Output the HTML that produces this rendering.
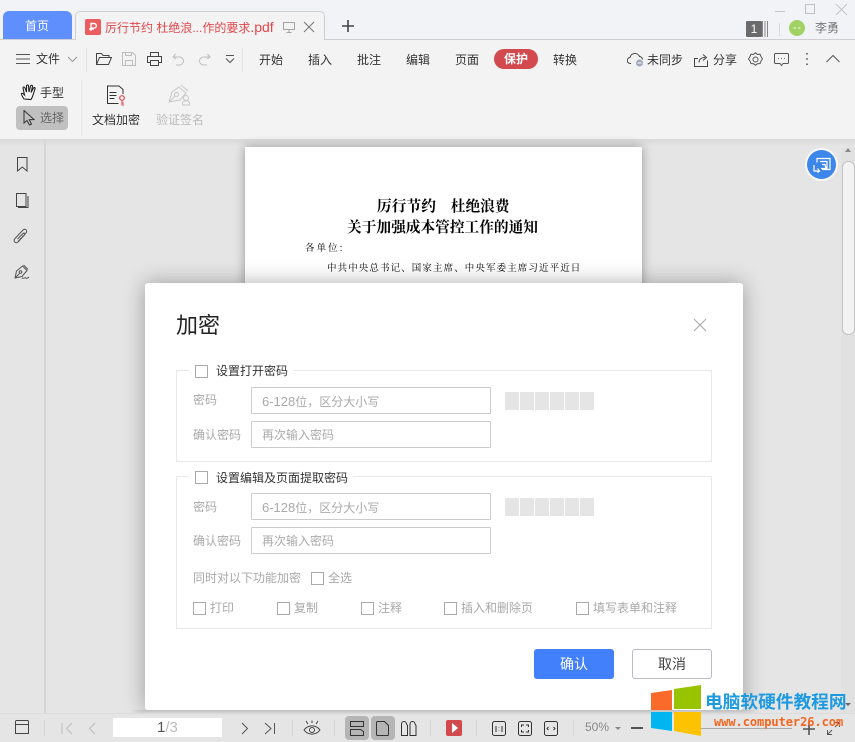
<!DOCTYPE html>
<html><head><meta charset="utf-8"><style>
html,body{margin:0;padding:0}
body{width:855px;height:742px;overflow:hidden;position:relative;background:#e5e5e5;font-family:"Liberation Sans","Noto Sans CJK SC",sans-serif}
.a,.t,svg{position:absolute}
.t{white-space:nowrap;font-size:12px;line-height:16px;color:#333}
.g{color:#a9a9a9}
.cb{position:absolute;width:11px;height:11px;border:1px solid #aaa;background:#fff}
.in{position:absolute;left:251px;width:238px;height:25px;border:1px solid #ccc;border-radius:1px;background:#fff;font-size:12px;line-height:27px;color:#aaa;text-indent:10px}
.in b{font-weight:normal;font-size:13px}
.bx{position:absolute;left:176px;width:534px;border:1px solid #e9e9e9}
.s{position:absolute;width:14px;height:18px;background:#e5e5e5}
svg{fill:none;stroke:#444;stroke-width:1}
</style></head><body>

<!-- title bar -->
<div class="a" style="left:0;top:0;width:855px;height:39px;background:#f2f3f7"></div>
<div class="a" style="left:0;top:39px;width:855px;height:1px;background:#cfcfd3"></div>
<div class="a" style="left:3px;top:11px;width:69px;height:28px;background:#5f8ffc;border-radius:6px 6px 0 0"></div>
<div class="t" style="left:25px;top:18px;color:#fff">首页</div>
<div class="a" style="left:75px;top:11px;width:250px;height:29px;box-sizing:border-box;background:#f3f3f3;border:1px solid #cfcfd3;border-bottom:0;border-radius:5px 5px 0 0"></div>
<div class="a" style="left:85px;top:19px;width:16px;height:16px;background:#ec5d5f;border-radius:2px"></div>
<svg style="left:85px;top:19px" width="16" height="16" viewBox="0 0 16 16"><path d="M6 12V4.500h3a2.200 2.200 0 0 1 0 4.600H6M4 10h5" stroke="#fff" stroke-width="1.400"/></svg>
<div class="t" style="left:105px;top:19px;font-size:12px;color:#e0474c">厉行节约 杜绝浪...作的要求<span style="font-size:14px">.pdf</span></div>
<svg style="left:282px;top:20px" width="14" height="14" viewBox="0 0 14 14"><path d="M1.500 2.500h11v7h-11zM7 9.500v3M4.500 12.500h5" stroke="#a5a5a5"/></svg>
<svg style="left:303px;top:21px" width="12" height="12" viewBox="0 0 12 12"><path d="M1 1l10 10M11 1L1 11" stroke="#777"/></svg>
<svg style="left:341px;top:19px" width="14" height="14" viewBox="0 0 14 14"><path d="M7 1v12M1 7h12" stroke="#444" stroke-width="1.600"/></svg>

<!-- window controls -->
<svg style="left:775px;top:2px" width="80" height="16" viewBox="0 0 80 16"><path d="M0 9.500h10" stroke="#c5c5c5"/><path d="M30.500 2.500h9v9h-9z" stroke="#c0c0c0"/><path d="M61 2l11 11M72 2L61 13" stroke="#c5c5c5"/></svg>
<div class="a" style="left:746px;top:21px;width:16px;height:16px;background:#6b6b6b;border-radius:1px;color:#fff;font-size:12px;line-height:16px;text-align:center">1</div>
<svg style="left:762px;top:21px" width="6" height="16" viewBox="0 0 6 16"><path d="M.5 0v16M3 0v16M5.500 0v16" stroke="#888"/></svg>
<div class="a" style="left:779px;top:23px;width:1px;height:13px;background:#dcdcdc"></div>
<div class="a" style="left:789px;top:20px;width:16px;height:16px;border-radius:50%;background:#a2d264"></div>
<svg style="left:789px;top:20px" width="16" height="16" viewBox="0 0 16 16"><path d="M4.500 8h2.500M9 8h2.500" stroke="#d6eab8" stroke-width="1.500"/></svg>
<div class="t" style="left:815px;top:20px;color:#777">李勇</div>

<!-- toolbar -->
<div class="a" style="left:0;top:40px;width:855px;height:99px;background:#f3f3f3"></div>
<svg style="left:16px;top:53px" width="14" height="12" viewBox="0 0 14 12"><path d="M0 1.500h14M0 6h14M0 10.500h14" stroke="#555"/></svg>
<div class="t" style="left:36px;top:51px">文件</div>
<svg style="left:67px;top:56px" width="11" height="7" viewBox="0 0 11 7"><path d="M1 1l4.500 4.500L10 1" stroke="#999"/></svg>
<div class="a" style="left:86px;top:48px;width:1px;height:24px;background:#e2e2e2"></div>
<svg style="left:96px;top:52px" width="16" height="14" viewBox="0 0 16 14"><path d="M.5 12.500V1.500h5l1.500 2h6v2M.5 12.500h12l3-7H3.500z" stroke="#444"/></svg>
<svg style="left:122px;top:52px" width="14" height="14" viewBox="0 0 14 14"><path d="M.5.500h10l3 3v10H.5zM3.500 13.500v-5h7v5M3.500 .500v3h6v-3" stroke="#bdbdbd"/></svg>
<svg style="left:147px;top:52px" width="15" height="14" viewBox="0 0 15 14"><path d="M3.500 4.500v-4h8v4M3.500 10.500h-3v-6h14v6h-3M3.500 8.500h8v5h-8z" stroke="#444"/></svg>
<svg style="left:172px;top:53px" width="13" height="13" viewBox="0 0 13 13"><path d="M3.500 1L1 4l3 2M1 4h6.500a4 4 0 0 1 0 8H4" stroke="#bdbdbd"/></svg>
<svg style="left:198px;top:53px" width="13" height="13" viewBox="0 0 13 13"><path d="M9.500 1L12 4 9 6M12 4H5.500a4 4 0 0 0 0 8H9" stroke="#bdbdbd"/></svg>
<svg style="left:225px;top:55px" width="10" height="9" viewBox="0 0 10 9"><path d="M1 .500h8M1 3.500l4 4 4-4" stroke="#555"/></svg>
<div class="a" style="left:242px;top:48px;width:1px;height:24px;background:#e2e2e2"></div>
<div class="t" style="left:259px;top:52px">开始</div>
<div class="t" style="left:308px;top:52px">插入</div>
<div class="t" style="left:357px;top:52px">批注</div>
<div class="t" style="left:406px;top:52px">编辑</div>
<div class="t" style="left:455px;top:52px">页面</div>
<div class="a" style="left:494px;top:49px;width:44px;height:20px;border-radius:10px;background:#d2494e"></div>
<div class="t" style="left:504px;top:51px;color:#fff;font-weight:bold">保护</div>
<div class="t" style="left:553px;top:52px">转换</div>
<svg style="left:627px;top:52px" width="17" height="15" viewBox="0 0 17 15"><path d="M4 11.500H3.500a3 3 0 0 1-.5-6 5 5 0 0 1 9.500-1 3.500 3.500 0 0 1 3 3" stroke="#444"/><circle cx="12.500" cy="11" r="3.500" fill="#9fa9bd" stroke="none"/><path d="M10.500 11h4" stroke="#fff"/></svg>
<div class="t" style="left:647px;top:52px">未同步</div>
<svg style="left:694px;top:53px" width="15" height="14" viewBox="0 0 15 14"><path d="M4 5.500H.5v8h13v-6M5 9.500c0-3 2-5 6-5M9 1.500l3.500 3-3.500 3" stroke="#444"/></svg>
<div class="t" style="left:713px;top:52px">分享</div>
<svg style="left:748px;top:52px" width="15" height="15" viewBox="0 0 15 15"><path d="M7.500 .800l2 1.700 2.500-.3 1 2.300 1.500 2.500-1.500 2-1 2.500-2.500.2-2 1.500-2-1.500-2.500-.2-1-2.500L.500 7 2 4.500l1-2.300 2.500.3z" stroke="#555"/><circle cx="7.500" cy="7.500" r="2.500" stroke="#555"/></svg>
<svg style="left:774px;top:53px" width="15" height="14" viewBox="0 0 15 14"><path d="M1.500.500h12a1 1 0 0 1 1 1v8a1 1 0 0 1-1 1H9l-1.500 2-1.500-2H1.500a1 1 0 0 1-1-1v-8a1 1 0 0 1 1-1z" stroke="#555"/><path d="M4 5.500h1M7 5.500h1M10 5.500h1" stroke="#777"/></svg>
<svg style="left:805px;top:52px" width="4" height="14" viewBox="0 0 4 14"><path d="M2 1v1.500M2 6.300v1.500M2 11.500V13" stroke="#555" stroke-width="1.600"/></svg>
<svg style="left:826px;top:54px" width="14" height="9" viewBox="0 0 14 9"><path d="M.5 8L7 1.500 13.500 8" stroke="#555"/></svg>

<svg style="left:20px;top:84px" width="17" height="17" viewBox="0 0 17 17"><path d="M4 15C2 12 1 10 1.500 9.500c1-.7 2 .5 3 1.500L3 4c0-1.500 1.500-1.500 2 0l1.500 4L6.500 2c0-1.500 2-1.500 2 0L9 8l1.500-6c.5-1 2-1 2 .5L11 8.500l2.500-4.500c.8-1 2-.3 1.500 1L13 11c-.5 2-1 3-2 4.500z" stroke="#222" stroke-width="1.100"/></svg>
<div class="t" style="left:40px;top:85px">手型</div>
<div class="a" style="left:16px;top:106px;width:52px;height:24px;border-radius:4px;background:#c0c0c0"></div>
<svg style="left:23px;top:110px" width="12" height="16" viewBox="0 0 12 16"><path d="M1 .500v12.500l3-2.500 2.500 4.500 2-1-2.300-4.300L11 9.500z" stroke="#333"/></svg>
<div class="t" style="left:40px;top:110px;color:#666">选择</div>
<div class="a" style="left:81px;top:80px;width:1px;height:56px;background:#e6e6e6"></div>
<svg style="left:106px;top:85px" width="20" height="21" viewBox="0 0 20 21"><path d="M12.500 18.500H1.500V1H13l4 3.500V9M3.500 7.500h7M3.500 10.500h7M3.500 13.500h5" stroke="#333"/><circle cx="16" cy="13" r="2.300" stroke="#e0474c" stroke-width="1.200"/><path d="M16 15.500v5M16 18h2M16 20h2" stroke="#e0474c"/></svg>
<div class="t" style="left:92px;top:112px">文档加密</div>
<svg style="left:168px;top:83px" width="23" height="23" viewBox="0 0 23 23"><path d="M1 19L4 9l7-5 7 6-6 7zM13 2l7 6M1 19l6-6" stroke="#c8c8c8"/><circle cx="8.500" cy="11.500" r="2" stroke="#c8c8c8"/><circle cx="18" cy="15" r="2.500" stroke="#c8c8c8"/><path d="M14.500 22v-2a2 2 0 0 1 2-2h3a2 2 0 0 1 2 2v2z" stroke="#c8c8c8"/></svg>
<div class="t" style="left:156px;top:112px;color:#bcbcbc">验证签名</div>

<!-- content area -->
<div class="a" style="left:0;top:139px;width:855px;height:7px;background:linear-gradient(#d9d9d9,#e5e5e5)"></div>
<div class="a" style="left:44px;top:139px;width:2px;height:574px;background:#d6d6d6"></div>
<svg style="left:17px;top:157px" width="11" height="15" viewBox="0 0 11 15"><path d="M.500.500h9.500v13.500L5.300 10 .500 14z" stroke="#444"/></svg>
<svg style="left:16px;top:193px" width="13" height="15" viewBox="0 0 13 15"><path d="M.500 13.500V.500h9.500v13zM12 3v11.500H2" stroke="#444"/></svg>
<svg style="left:13px;top:228px" width="16" height="16" viewBox="0 0 16 16"><path d="M5 13.500l8-8.500c2-2.500-1-5-3-3L2 10.500c-2.500 3 1 5.500 3 3.500L11.500 7c1-1.500-.5-2.500-1.500-1.500L4.500 11" stroke="#555"/></svg>
<svg style="left:14px;top:264px" width="16" height="16" viewBox="0 0 16 16"><path d="M1 14L2.500 7l6-5 4.500 4.500-5 6zM1 14l4.500-4.500M9.500 1L14 5.500M8 14c2 1 3-1 4 0s2 0 3-1" stroke="#555"/><circle cx="6.500" cy="8" r="1.300" stroke="#555"/></svg>

<!-- page -->
<div class="a" style="left:245px;top:147px;width:397px;height:140px;background:#fff;box-shadow:0 0 10px rgba(0,0,0,.35)"></div>
<div class="t" style="left:377px;top:197px;font-size:14.700px;line-height:18px;font-weight:bold;color:#000;font-family:'Noto Serif CJK SC','Noto Sans CJK SC',serif">厉行节约<span style="display:inline-block;width:15px"></span>杜绝浪费</div>
<div class="t" style="left:347px;top:218px;font-size:14.700px;line-height:18px;font-weight:bold;color:#000;font-family:'Noto Serif CJK SC','Noto Sans CJK SC',serif">关于加强成本管控工作的通知</div>
<div class="t" style="left:305px;top:240px;font-size:9.500px;line-height:14px;letter-spacing:2px;color:#000;font-family:'Noto Serif CJK SC',serif">各单位:</div>
<div class="t" style="left:327px;top:260px;font-size:9.500px;line-height:14px;letter-spacing:1.100px;color:#000;font-family:'Noto Serif CJK SC',serif">中共中央总书记、国家主席、中央军委主席习近平近日</div>

<!-- scrollbar -->
<div class="a" style="left:841px;top:148px;width:14px;height:565px;background:#e1e1e1"></div>
<div class="a" style="left:842px;top:161px;width:13px;height:174px;box-sizing:border-box;background:#f3f3f3;border:1px solid #c4c4c4;border-radius:6px"></div>
<div class="a" style="left:845px;top:148px;width:0;height:0;border-left:3px solid transparent;border-right:3px solid transparent;border-bottom:4px solid #888"></div>

<!-- blue circle -->
<div class="a" style="left:807px;top:150px;width:29px;height:29px;box-sizing:content-box;border-radius:50%;background:#3d86ea;box-shadow:0 0 0 2px #f8f8f8"></div>
<svg style="left:813px;top:156px" width="18" height="17" viewBox="0 0 18 17"><path d="M4 6.500V2.500h13v11H9M7 5.500h7v8M9 8.500h3l1 4H8M1 9v6h5M4.500 12.500L6.500 15l-2 1.500" stroke="#fff" stroke-width="1.200"/></svg>

<!-- dialog shadow -->
<div class="a" style="left:145px;top:283px;width:598px;height:427px;background:#fff;border-radius:3px;box-shadow:0 0 22px rgba(0,0,0,.32)"></div>
<div class="t" style="left:176px;top:311px;font-size:22px;line-height:30px;color:#222">加密</div>
<svg style="left:693px;top:318px" width="14" height="14" viewBox="0 0 14 14"><path d="M1 1l12 12M13 1L1 13" stroke="#a5a5a5"/></svg>

<!-- group 1 -->
<div class="bx" style="top:370px;height:90px"></div>
<div class="a" style="left:189px;top:362px;width:104px;height:16px;background:#fff"></div>
<div class="cb" style="left:195px;top:365px"></div>
<div class="t" style="left:216px;top:363px">设置打开密码</div>
<div class="t g" style="left:193px;top:392px">密码</div>
<div class="in" style="top:387px"><b>6-128</b>位，区分大小写</div>
<div class="t g" style="left:193px;top:427px">确认密码</div>
<div class="in" style="top:421px">再次输入密码</div>
<div class="s" style="left:505px;top:392px"></div><div class="s" style="left:520px;top:392px"></div><div class="s" style="left:535px;top:392px"></div><div class="s" style="left:550px;top:392px"></div><div class="s" style="left:565px;top:392px"></div><div class="s" style="left:580px;top:392px"></div>

<!-- group 2 -->
<div class="bx" style="top:476px;height:151px"></div>
<div class="a" style="left:189px;top:468px;width:164px;height:16px;background:#fff"></div>
<div class="cb" style="left:195px;top:471px"></div>
<div class="t" style="left:216px;top:470px">设置编辑及页面提取密码</div>
<div class="t g" style="left:193px;top:499px">密码</div>
<div class="in" style="top:493px"><b>6-128</b>位，区分大小写</div>
<div class="t g" style="left:193px;top:533px">确认密码</div>
<div class="in" style="top:527px">再次输入密码</div>
<div class="s" style="left:505px;top:498px"></div><div class="s" style="left:520px;top:498px"></div><div class="s" style="left:535px;top:498px"></div><div class="s" style="left:550px;top:498px"></div><div class="s" style="left:565px;top:498px"></div><div class="s" style="left:580px;top:498px"></div>
<div class="t g" style="left:193px;top:570px">同时对以下功能加密</div>
<div class="cb" style="left:311px;top:572px"></div>
<div class="t g" style="left:328px;top:570px">全选</div>
<div class="cb" style="left:193px;top:602px"></div><div class="t g" style="left:210px;top:600px">打印</div>
<div class="cb" style="left:277px;top:602px"></div><div class="t g" style="left:294px;top:600px">复制</div>
<div class="cb" style="left:361px;top:602px"></div><div class="t g" style="left:378px;top:600px">注释</div>
<div class="cb" style="left:444px;top:602px"></div><div class="t g" style="left:461px;top:600px">插入和删除页</div>
<div class="cb" style="left:576px;top:602px"></div><div class="t g" style="left:593px;top:600px">填写表单和注释</div>

<div class="a" style="left:534px;top:649px;width:80px;height:30px;background:#4280fb;border-radius:3px;color:#fff;font-size:14px;line-height:30px;text-align:center">确认</div>
<div class="a" style="left:632px;top:649px;width:78px;height:28px;border:1px solid #bcbcc4;border-radius:3px;color:#444;font-size:14px;line-height:29px;text-align:center;background:#fff">取消</div>

<!-- status bar -->
<div class="a" style="left:0;top:713px;width:855px;height:29px;background:#e5e5e5;border-top:1px solid #dcdcdc;box-sizing:border-box"></div>
<div class="a" style="left:130px;top:710px;width:628px;height:5px;background:linear-gradient(#bdbdbd,#e5e5e5);-webkit-mask-image:linear-gradient(90deg,transparent,#000 15px,#000 613px,transparent);mask-image:linear-gradient(90deg,transparent,#000 15px,#000 613px,transparent)"></div>
<div class="a" style="left:44px;top:720px;width:1px;height:16px;background:#d5d5d5"></div>
<svg style="left:15px;top:720px" width="15" height="15" viewBox="0 0 15 15"><path d="M.500 1.500a1 1 0 0 1 1-1h11a1 1 0 0 1 1 1v12h-13zM.500 4.500h13" stroke="#444"/></svg>
<svg style="left:61px;top:722px" width="40" height="13" viewBox="0 0 40 13"><path d="M1 1v11M11 1L5.500 6.500 11 12M34 1l-5.500 5.500L34 12" stroke="#bdbdbd"/></svg>
<div class="a" style="left:113px;top:718px;width:109px;height:19px;background:#fff"></div>
<div class="t" style="left:157px;top:719px;font-size:15px;color:#555;line-height:18px">1<span style="color:#bbb">/3</span></div>
<svg style="left:240px;top:722px" width="36" height="13" viewBox="0 0 36 13"><path d="M2 1l5.500 5.500L2 12M25 1l6 5.500-6 5.500M34.500 1v11" stroke="#555"/></svg>
<div class="a" style="left:292px;top:720px;width:1px;height:16px;background:#d5d5d5"></div>
<svg style="left:303px;top:720px" width="18" height="16" viewBox="0 0 18 16"><path d="M1 10c4-5.500 12-5.500 16 0-4 5.500-12 5.500-16 0z" stroke="#444"/><circle cx="9" cy="10" r="2.500" stroke="#444"/><path d="M3 1l2 3M9 .500V3M15 1l-2 3" stroke="#444"/></svg>
<div class="a" style="left:334px;top:720px;width:1px;height:16px;background:#d5d5d5"></div>
<div class="a" style="left:345px;top:716px;width:24px;height:24px;background:#b5b5b5;border-radius:4px"></div>
<div class="a" style="left:371px;top:716px;width:24px;height:24px;background:#b5b5b5;border-radius:4px"></div>
<svg style="left:350px;top:721px" width="15" height="15" viewBox="0 0 15 15"><path d="M.500.500h13v5h-13zM.500 8.500h10l3 2v4h-13z" stroke="#333"/></svg>
<svg style="left:376px;top:721px" width="14" height="15" viewBox="0 0 14 15"><path d="M.500 1.500a1 1 0 0 1 1-1h7l4 4v9a1 1 0 0 1-1 1h-10a1 1 0 0 1-1-1z" stroke="#333"/></svg>
<svg style="left:401px;top:721px" width="16" height="15" viewBox="0 0 16 15"><path d="M.500 3a2.500 2.500 0 0 1 5 0l1 1.500v10H.500zM9 3a2.500 2.500 0 0 1 5 0l1 1.500v10H9z" stroke="#333"/></svg>
<div class="a" style="left:430px;top:720px;width:1px;height:16px;background:#d5d5d5"></div>
<div class="a" style="left:446px;top:720px;width:16px;height:16px;background:#d2494e;border-radius:2px"></div>
<div class="a" style="left:452px;top:723px;width:0;height:0;border-left:6px solid #fff;border-top:5px solid transparent;border-bottom:5px solid transparent"></div>
<div class="a" style="left:476px;top:720px;width:1px;height:16px;background:#d5d5d5"></div>
<svg style="left:492px;top:721px" width="15" height="15" viewBox="0 0 15 15"><rect x=".5" y=".5" width="13" height="14" rx="2" stroke="#333"/><path d="M4 5v6M10 5v6M7 6.500v.5M7 9v.5" stroke="#333"/></svg>
<svg style="left:518px;top:721px" width="15" height="15" viewBox="0 0 15 15"><rect x=".5" y=".5" width="13" height="14" rx="2" stroke="#333"/><path d="M3.500 6V4h2.500M10.500 6V4H8M3.500 9v2h2.500M10.500 9v2H8" stroke="#333"/></svg>
<svg style="left:544px;top:721px" width="15" height="15" viewBox="0 0 15 15"><rect x=".5" y=".5" width="13" height="14" rx="2" stroke="#333"/><path d="M4.500 6L3 7.500 4.500 9M9.500 6L11 7.500 9.500 9" stroke="#333"/></svg>
<div class="a" style="left:573px;top:720px;width:1px;height:16px;background:#d5d5d5"></div>
<div class="t" style="left:585px;top:719px;color:#888">50%</div>
<div class="a" style="left:615px;top:727px;width:0;height:0;border-left:3px solid transparent;border-right:3px solid transparent;border-top:3px solid #888"></div>
<div class="a" style="left:631px;top:727px;width:12px;height:2px;background:#555"></div>
<div class="a" style="left:700px;top:728px;width:92px;height:1px;background:#aaa"></div>
<svg style="left:802px;top:722px" width="14" height="14" viewBox="0 0 14 14"><path d="M7 1v12M1 7h12" stroke="#555" stroke-width="1.600"/></svg>
<svg style="left:826px;top:721px" width="15" height="15" viewBox="0 0 15 15"><path d="M9 1.500h4.500V6M13.500 1.500L9 6M6 13.500H1.500V9M1.500 13.500L6 9" stroke="#555"/></svg>
<div class="a" style="left:845px;top:703px;width:0;height:0;border-left:3px solid transparent;border-right:3px solid transparent;border-top:3px solid #666"></div>

<!-- watermark -->
<svg style="left:651px;top:684px;stroke:none" width="50" height="53" viewBox="0 0 50 53"><path d="M0 9l21-3v20H0z" fill="#f96a2b" stroke="none"/><path d="M23 5l27-4v24H23z" fill="#97c300" stroke="none"/><path d="M0 28h21v19l-21-3z" fill="#00b5f0" stroke="none"/><path d="M23 28h27v24l-27-5z" fill="#fdc200" stroke="none"/></svg>
<div class="t" style="left:705px;top:691px;font-size:17.700px;line-height:22px;font-weight:bold;color:#1d9ae0">电脑软硬件教程网</div>
<div class="t" style="left:714px;top:714px;font-family:'DejaVu Sans Mono',monospace;font-size:12px;letter-spacing:-.05px;font-weight:bold;color:#f4661f;line-height:16px">www.computer26.com</div>
</body></html>
